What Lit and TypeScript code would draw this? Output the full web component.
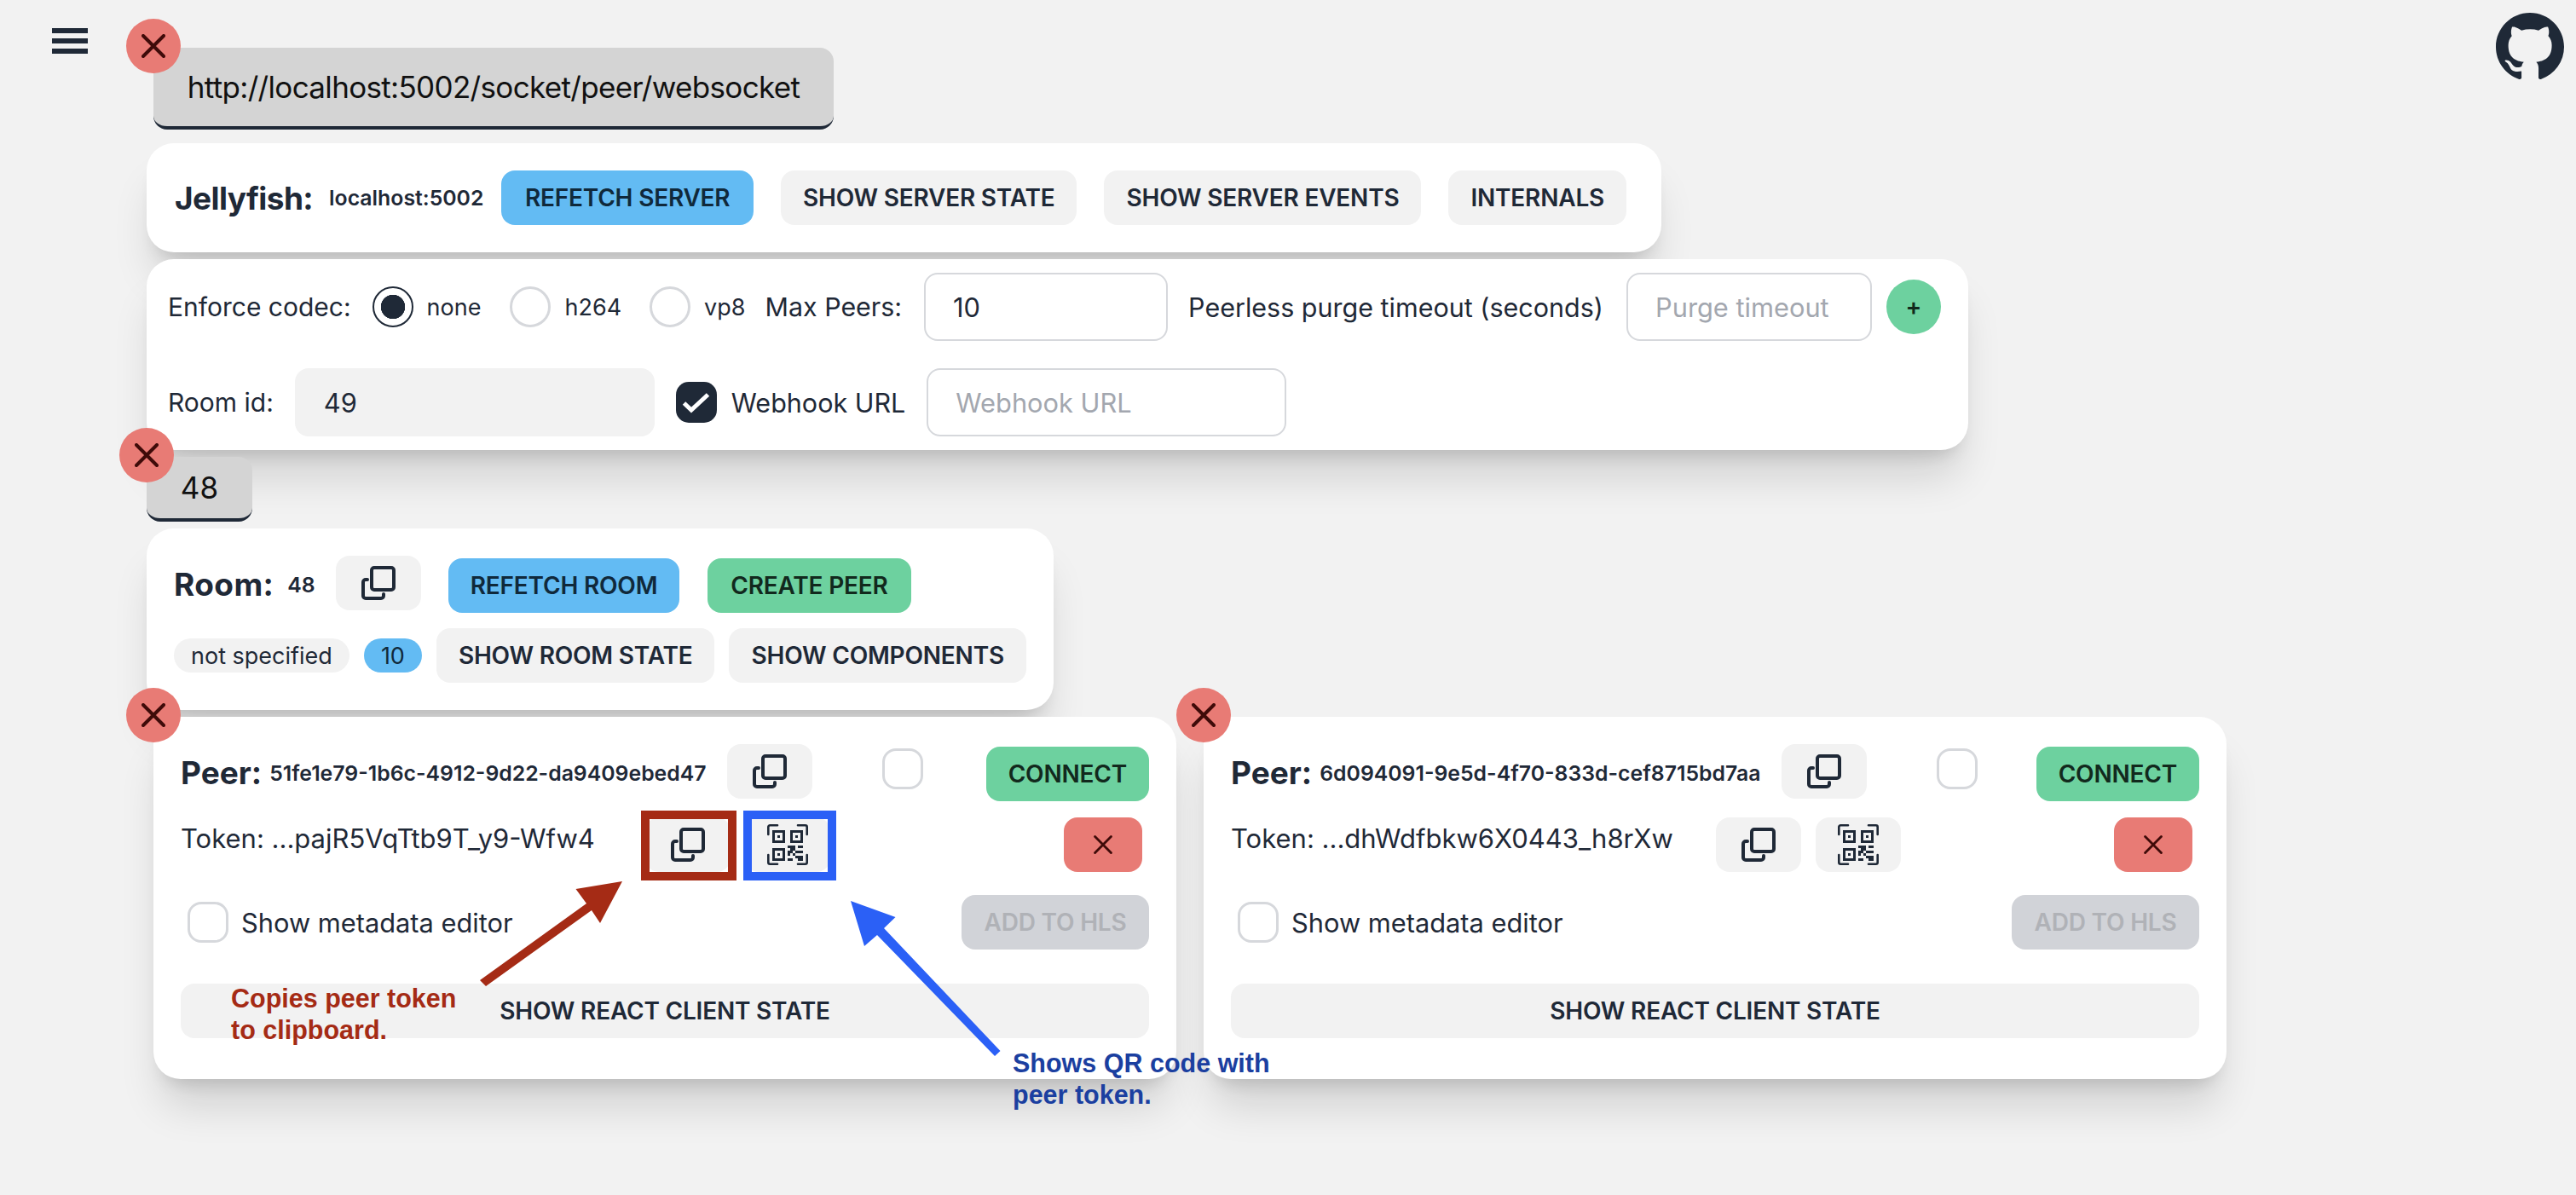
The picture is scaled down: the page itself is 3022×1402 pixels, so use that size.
import { LitElement, html, css, svg } from 'lit'
import { customElement, property } from 'lit/decorators.js'

const shared = css`
  * {
    box-sizing: border-box;
  }
  .btn {
    display: inline-flex;
    align-items: center;
    justify-content: center;
    height: 64px;
    padding: 0 26px;
    border: none;
    border-radius: 16px;
    background: #f2f2f2;
    color: #1f2937;
    font: 600 28px Inter, sans-serif;
    letter-spacing: -0.2px;
    text-transform: uppercase;
    white-space: nowrap;
  }
  .btn.info {
    background: #63bbf3;
    color: #10293b;
  }
  .btn.success {
    background: #6dd19f;
    color: #12291d;
  }
  .btn.error {
    background: #e87b75;
    color: #3f0b09;
  }
  .btn.off {
    background: #d1d3d8;
    color: #b0b2b7;
  }
  .btn.icon {
    width: 100px;
    padding: 0;
  }
  .check {
    display: block;
    flex: none;
    width: 48px;
    height: 48px;
    border: 3px solid #d6d8dc;
    border-radius: 16px;
    background: #fff;
  }
  .card {
    border-radius: 32px;
    background: #fff;
    box-shadow: 0 40px 50px -10px rgba(0, 0, 0, 0.14), 0 16px 20px -12px rgba(0, 0, 0, 0.14);
  }
  .title {
    font: 700 37px Inter, sans-serif;
    color: #1f2937;
  }
  .mini {
    font: 600 24.800px Inter, sans-serif;
    color: #1f2937;
  }
  .close {
    position: absolute;
    left: -32px;
    top: -34px;
    z-index: 5;
    display: flex;
    align-items: center;
    justify-content: center;
    width: 64px;
    height: 64px;
    border-radius: 50%;
    background: #e87b75;
  }
`

const copyIcon = html`<svg width="40" height="40" viewBox="0 0 40 40" fill="none" stroke="#1f2937" stroke-width="4" stroke-linecap="round" stroke-linejoin="round">
  <rect x="12" y="2" width="26" height="26" rx="3"></rect>
  <path d="M7 16H5a3 3 0 0 0-3 3v16a3 3 0 0 0 3 3h18a3 3 0 0 0 3-3v-2"></path>
</svg>`

// data cells of the qr glyph, [column, row, span] on a 3px grid
const qrCells = [
  [0, 0, 3], [4, 0, 2],
  [1, 1, 2],
  [0, 2, 2], [3, 2, 3],
  [0, 3, 1], [2, 3, 1],
  [3, 4, 3],
  [0, 5, 2], [4, 5, 2],
]

const qrIcon = html`<svg width="48" height="48" viewBox="0 0 48 48" fill="none" stroke="#1f2937" stroke-width="2.600">
  <path stroke-linecap="round" d="M1.300 12V3.300a2 2 0 0 1 2-2H12M36 1.300h8.700a2 2 0 0 1 2 2V12M1.300 36v8.700a2 2 0 0 0 2 2H12M46.700 36v8.700a2 2 0 0 1-2 2H36"></path>
  <path stroke-width="3" d="M7.500 8.500h12v12h-12zM28.500 8.500h12v12h-12zM7.500 29.500h12v12h-12z"></path>
  <g fill="#1f2937" stroke="none">
    <rect x="12" y="13" width="3" height="3"></rect>
    <rect x="33" y="13" width="3" height="3"></rect>
    <rect x="12" y="34" width="3" height="3"></rect>
    ${qrCells.map(([c, r, n]) => svg`<rect x=${24 + c * 3} y=${25 + r * 3} width=${n * 3} height="3"></rect>`)}
  </g>
</svg>`

const xIcon = (size: number, width: number) => html`<svg width=${size} height=${size} viewBox="0 0 28 28" fill="none" stroke="#3f0b09" stroke-width=${width} stroke-linecap="round">
  <path d="M2 2l24 24M26 2L2 26"></path>
</svg>`

@customElement('peer-card')
class PeerCard extends LitElement {
  static styles = [
    shared,
    css`
      :host {
        display: block;
        position: relative;
        width: 1200px;
      }
      .body {
        display: flex;
        flex-direction: column;
        height: 425px;
        padding: 32px;
      }
      .row {
        display: flex;
        align-items: center;
      }
      .head {
        height: 67px;
      }
      .head .id {
        margin-left: 9px;
      }
      .head .btn.icon {
        align-self: flex-start;
        margin-left: 24px;
      }
      .head .check {
        align-self: flex-start;
        margin: 5px 0 0 82px;
      }
      .head .btn.success {
        margin-left: auto;
        align-self: flex-end;
      }
      .token {
        height: 66px;
        margin-top: 18px;
        font: 400 31px Inter, sans-serif;
        color: #1f2937;
      }
      .token .text {
        margin-top: -16px;
        white-space: nowrap;
      }
      .token .btn.icon + .btn.icon {
        margin-left: 17px;
      }
      .token .btn.error {
        width: 92px;
        padding: 0;
        margin-left: auto;
        margin-right: 8px;
      }
      .meta {
        height: 64px;
        margin-top: 26px;
        padding-left: 8px;
        font: 400 30.800px Inter, sans-serif;
        color: #1f2937;
      }
      .meta .label {
        margin-left: 15px;
      }
      .meta .btn {
        width: 220px;
        padding: 0;
        margin-left: auto;
      }
      .wide {
        width: 100%;
        margin-top: 40px;
      }
    `,
  ]

  @property() peerId = ''
  @property() token = ''
  @property({ type: Number }) tokenWidth = 0

  render() {
    return html`
      <div class="close">${xIcon(28, 4)}</div>
      <div class="card body">
        <div class="row head">
          <span class="title">Peer:</span>
          <span class="mini id">${this.peerId}</span>
          <div class="btn icon">${copyIcon}</div>
          <span class="check"></span>
          <div class="btn success">Connect</div>
        </div>
        <div class="row token">
          <span class="text" style="width:${this.tokenWidth}px">Token: ...${this.token}</span>
          <div class="btn icon">${copyIcon}</div>
          <div class="btn icon">${qrIcon}</div>
          <div class="btn error">${xIcon(22, 3.600)}</div>
        </div>
        <div class="row meta">
          <span class="check"></span>
          <span class="label">Show metadata editor</span>
          <div class="btn off">Add to HLS</div>
        </div>
        <div class="btn wide">Show React client state</div>
      </div>
    `
  }
}

const codecs = [
  { name: 'none', gap: 34 },
  { name: 'h264', gap: 33 },
  { name: 'vp8', gap: 23 },
]

@customElement('app-root')
class App extends LitElement {
  static styles = [
    shared,
    css`
      :host {
        display: block;
        position: relative;
        width: 3022px;
        min-height: 1402px;
        overflow: hidden;
        background: #f2f2f2;
        font-family: Inter, sans-serif;
        color: #1f2937;
      }
      .page {
        display: flex;
      }
      .rail {
        width: 172px;
        flex: none;
        padding: 33px 0 0 61px;
      }
      .burger {
        display: flex;
        flex-direction: column;
        gap: 6px;
        width: 42px;
      }
      .burger i {
        height: 6px;
        background: #1f2937;
      }
      main {
        flex: 1;
        padding-top: 56px;
      }
      .git {
        flex: none;
        padding: 15px 14px 0 0;
      }
      .tab {
        position: relative;
        display: flex;
        align-items: center;
        justify-content: center;
        border-bottom: 4px solid #1f2937;
        border-radius: 16px;
        background: #d4d4d4;
        color: #111;
        font: 400 35px Inter, sans-serif;
      }
      .tab.server {
        width: 798px;
        height: 96px;
        margin-left: 8px;
        letter-spacing: -0.67px;
      }
      .tab.room {
        width: 124px;
        height: 76px;
        margin-top: 8px;
      }
      .server-card {
        display: flex;
        align-items: center;
        width: 1777px;
        height: 128px;
        margin-top: 16px;
        padding-left: 33px;
      }
      .server-card .title {
        letter-spacing: -0.6px;
      }
      .server-card .mini {
        margin-left: 19px;
      }
      .server-card .btn {
        margin-left: 32px;
      }
      .server-card .btn.info {
        margin-left: 21px;
        padding: 0 27.500px;
      }
      .options {
        width: 2137px;
        height: 224px;
        margin-top: 8px;
        padding: 16px 25px;
      }
      .line {
        display: flex;
        align-items: center;
        height: 80px;
        font-size: 30px;
        white-space: nowrap;
      }
      .line + .line {
        margin-top: 32px;
      }
      .lead {
        margin-right: 25px;
      }
      .radio {
        flex: none;
        width: 48px;
        height: 48px;
        margin-right: 16px;
        border: 3px solid #d6d8dc;
        border-radius: 50%;
      }
      .radio.on {
        border: 2px solid #1f2937;
        background: radial-gradient(circle, #1f2937 0 14px, #fff 14.500px);
      }
      .codec {
        font-size: 27px;
      }
      .max-label {
        font-size: 30.400px;
      }
      .wider {
        font-size: 30.500px;
      }
      .widest {
        font-size: 30.500px;
      }
      .field {
        flex: none;
        height: 80px;
        padding: 0 32px;
        border: 2.500px solid #d6d8dc;
        border-radius: 16px;
        display: flex;
        align-items: center;
        font-size: 30.800px;
        color: #1f2937;
      }
      .field.hint {
        color: #a3a7af;
      }
      .field.peers-max {
        width: 286px;
        margin: 0 24px 0 26px;
      }
      .field.purge {
        width: 288px;
        margin-left: 27px;
      }
      .field.room-id {
        width: 422px;
        margin-left: 25px;
        padding: 0 34px;
        border: none;
        background: #f2f2f2;
      }
      .field.hook {
        width: 422px;
        margin-left: 25px;
      }
      .plus {
        width: 64px;
        height: 64px;
        margin-left: 17px;
        border-radius: 50%;
        background: #6dd19f;
        color: #12291d;
        display: flex;
        align-items: center;
        justify-content: center;
        font: 600 28px Inter, sans-serif;
      }
      .tick {
        flex: none;
        width: 48px;
        height: 48px;
        margin: 0 17px 0 25px;
        border-radius: 15px;
        background: #1f2937;
      }
      .tick svg {
        display: block;
      }
      .room-card {
        width: 1064px;
        height: 213px;
        margin-top: 8px;
        padding: 32px 31px 0 32px;
      }
      .room-top {
        display: flex;
        align-items: center;
        height: 67px;
      }
      .room-top .title {
        letter-spacing: 0.4px;
      }
      .room-top .mini {
        margin-left: 16px;
      }
      .room-top .btn.icon {
        align-self: flex-start;
        margin-left: 24px;
      }
      .room-top .btn.info,
      .room-top .btn.success {
        align-self: flex-end;
        margin-left: 32px;
      }
      .room-top .btn.success {
        margin-left: 33px;
        padding: 0 27px;
      }
      .room-bottom {
        display: flex;
        align-items: center;
        margin-top: 18px;
      }
      .pill {
        display: flex;
        align-items: center;
        height: 40px;
        padding: 0 20px;
        border-radius: 20px;
        background: #f2f2f2;
        font-size: 27px;
        white-space: nowrap;
      }
      .pill.count {
        margin-left: 17px;
        background: #63bbf3;
        color: #10293b;
      }
      .room-bottom .btn {
        margin-left: 17px;
      }
      .peers {
        display: flex;
        gap: 32px;
        margin: 8px 0 0 8px;
      }
      .marks {
        position: absolute;
        left: 0;
        top: 0;
        z-index: 8;
        pointer-events: none;
      }
      .note {
        position: absolute;
        z-index: 9;
        margin: 0;
        font: 700 30.500px/37px 'Liberation Sans', Arial, sans-serif;
        white-space: nowrap;
      }
      .note.red {
        left: 271px;
        top: 1153px;
        color: #a52b15;
      }
      .note.blue {
        left: 1188px;
        top: 1229px;
        color: #1b3fa0;
      }
    `,
  ]

  render() {
    return html`
      <div class="page">
        <div class="rail">
          <div class="burger"><i></i><i></i><i></i></div>
        </div>
        <main>
          <div class="tab server">
            <div class="close">${xIcon(28, 4)}</div>
            http://localhost:5002/socket/peer/websocket
          </div>
          <div class="card server-card">
            <span class="title">Jellyfish:</span>
            <span class="mini">localhost:5002</span>
            <div class="btn info">Refetch server</div>
            <div class="btn">Show server state</div>
            <div class="btn">Show server events</div>
            <div class="btn">Internals</div>
          </div>
          <div class="card options">
            <div class="line">
              <span class="lead">Enforce codec:</span>
              ${codecs.map(
                (c, i) => html`<span class="radio ${i === 0 ? 'on' : ''}"></span><span class="codec" style="margin-right:${c.gap}px">${c.name}</span>`,
              )}
              <span class="max-label">Max Peers:</span>
              <div class="field peers-max">10</div>
              <span class="wider">Peerless purge timeout (seconds)</span>
              <div class="field hint purge">Purge timeout</div>
              <div class="plus">+</div>
            </div>
            <div class="line">
              <span>Room id:</span>
              <div class="field room-id">49</div>
              <div class="tick">
                <svg width="48" height="48" viewBox="0 0 48 48" fill="none" stroke="#fff" stroke-width="5">
                  <path d="M9.500 25l8.500 8L37.500 15"></path>
                </svg>
              </div>
              <span class="widest">Webhook URL</span>
              <div class="field hint hook">Webhook URL</div>
            </div>
          </div>
          <div class="tab room">
            <div class="close">${xIcon(28, 4)}</div>
            48
          </div>
          <div class="card room-card">
            <div class="room-top">
              <span class="title">Room:</span>
              <span class="mini">48</span>
              <div class="btn icon">${copyIcon}</div>
              <div class="btn info">Refetch room</div>
              <div class="btn success">Create peer</div>
            </div>
            <div class="room-bottom">
              <span class="pill">not specified</span>
              <span class="pill count">10</span>
              <div class="btn">Show room state</div>
              <div class="btn">Show components</div>
            </div>
          </div>
          <div class="peers">
            <peer-card peerId="51fe1e79-1b6c-4912-9d22-da9409ebed47" token="pajR5VqTtb9T_y9-Wfw4" tokenWidth="545"></peer-card>
            <peer-card peerId="6d094091-9e5d-4f70-833d-cef8715bd7aa" token="dhWdfbkw6X0443_h8rXw" tokenWidth="569"></peer-card>
          </div>
        </main>
        <div class="git">
          <svg width="80" height="80" viewBox="0 0 16 16" fill="#1f2937">
            <path d="M8 0C3.580 0 0 3.580 0 8c0 3.540 2.290 6.530 5.470 7.590.4.070.55-.17.55-.38 0-.19-.01-.82-.01-1.490-2.010.37-2.530-.49-2.690-.94-.09-.23-.48-.94-.82-1.130-.28-.15-.68-.52-.01-.53.63-.01 1.080.58 1.230.82.72 1.210 1.870.87 2.330.66.07-.52.28-.87.51-1.070-1.780-.2-3.640-.89-3.640-3.950 0-.87.31-1.590.82-2.150-.08-.2-.36-1.020.08-2.120 0 0 .67-.21 2.200.82.64-.18 1.320-.27 2-.27.68 0 1.360.09 2 .27 1.530-1.040 2.200-.82 2.200-.82.44 1.100.16 1.920.08 2.120.51.56.82 1.270.82 2.150 0 3.070-1.870 3.750-3.650 3.950.29.25.54.73.54 1.480 0 1.070-.01 1.930-.01 2.200 0 .21.15.46.55.38A8.013 8.013 0 0016 8c0-4.420-3.580-8-8-8z"></path>
          </svg>
        </div>
      </div>
      <svg class="marks" width="3022" height="1402" viewBox="0 0 3022 1402" fill="none">
        ${svg`
          <rect x="757" y="956" width="102" height="72" stroke="#a52b15" stroke-width="10"></rect>
          <rect x="877" y="956" width="99" height="72" stroke="#2b60f6" stroke-width="10"></rect>
          <path fill="#a52b15" d="M730 1034L675.500 1043 688 1060 563 1150 570 1157 694 1068 704 1083z"></path>
          <path fill="#2b60f6" d="M998 1057L1050.500 1076 1037 1089 1173.500 1233 1167 1239 1029 1097 1014 1110z"></path>
        `}
      </svg>
      <p class="note red">Copies peer token<br />to clipboard.</p>
      <p class="note blue">Shows QR code with<br />peer token.</p>
    `
  }
}

export default App
export { PeerCard }
